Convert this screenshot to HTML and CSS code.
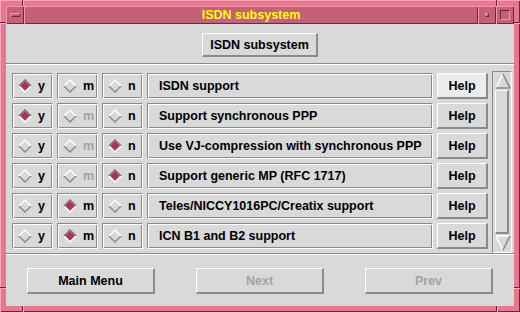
FILE: index.html
```html
<!DOCTYPE html>
<html>
<head>
<meta charset="utf-8">
<link rel="stylesheet" href="styles.css">
</head>
<body>
<div class="win">
  <span class="brk v t l1"></span><span class="brk v t r1"></span>
  <span class="brk v b l1"></span><span class="brk v b r1"></span>
  <span class="brk h l t2"></span><span class="brk h r t2"></span>
  <span class="brk h l b2"></span><span class="brk h r b2"></span>
  <div class="titlebar">
    <div class="tbtn"><span class="bar"></span></div>
    <div class="title">ISDN subsystem</div>
    <div class="tbtn"><span class="dot"></span></div>
    <div class="tbtn"><span class="sq"></span></div>
  </div>
  <div class="content">
    <div class="top"><div class="btn topbtn">ISDN subsystem</div></div>
    <div class="sep"></div>
    <div class="list">
      <div class="rows">
        <div class="row">
          <div class="box radio"><svg class="dia on" viewBox="0 0 14 14"><polygon class="f" points="2,7 7,2 12,7 7,12"/><polygon class="hi" points="0,7 7,0 14,7 12,7 7,2 2,7"/><polygon class="lo" points="0,7 7,14 14,7 12,7 7,12 2,7"/></svg><span>y</span></div>
          <div class="box radio"><svg class="dia" viewBox="0 0 14 14"><polygon class="f" points="2,7 7,2 12,7 7,12"/><polygon class="hi" points="0,7 7,0 14,7 12,7 7,2 2,7"/><polygon class="lo" points="0,7 7,14 14,7 12,7 7,12 2,7"/></svg><span>m</span></div>
          <div class="box radio"><svg class="dia" viewBox="0 0 14 14"><polygon class="f" points="2,7 7,2 12,7 7,12"/><polygon class="hi" points="0,7 7,0 14,7 12,7 7,2 2,7"/><polygon class="lo" points="0,7 7,14 14,7 12,7 7,12 2,7"/></svg><span>n</span></div>
          <div class="box label">ISDN support</div>
          <div class="btn help active">Help</div>
        </div>
        <div class="row">
          <div class="box radio"><svg class="dia on" viewBox="0 0 14 14"><polygon class="f" points="2,7 7,2 12,7 7,12"/><polygon class="hi" points="0,7 7,0 14,7 12,7 7,2 2,7"/><polygon class="lo" points="0,7 7,14 14,7 12,7 7,12 2,7"/></svg><span>y</span></div>
          <div class="box radio dis"><svg class="dia" viewBox="0 0 14 14"><polygon class="f" points="2,7 7,2 12,7 7,12"/><polygon class="hi" points="0,7 7,0 14,7 12,7 7,2 2,7"/><polygon class="lo" points="0,7 7,14 14,7 12,7 7,12 2,7"/></svg><span>m</span></div>
          <div class="box radio"><svg class="dia" viewBox="0 0 14 14"><polygon class="f" points="2,7 7,2 12,7 7,12"/><polygon class="hi" points="0,7 7,0 14,7 12,7 7,2 2,7"/><polygon class="lo" points="0,7 7,14 14,7 12,7 7,12 2,7"/></svg><span>n</span></div>
          <div class="box label">Support synchronous PPP</div>
          <div class="btn help">Help</div>
        </div>
        <div class="row">
          <div class="box radio"><svg class="dia" viewBox="0 0 14 14"><polygon class="f" points="2,7 7,2 12,7 7,12"/><polygon class="hi" points="0,7 7,0 14,7 12,7 7,2 2,7"/><polygon class="lo" points="0,7 7,14 14,7 12,7 7,12 2,7"/></svg><span>y</span></div>
          <div class="box radio dis"><svg class="dia" viewBox="0 0 14 14"><polygon class="f" points="2,7 7,2 12,7 7,12"/><polygon class="hi" points="0,7 7,0 14,7 12,7 7,2 2,7"/><polygon class="lo" points="0,7 7,14 14,7 12,7 7,12 2,7"/></svg><span>m</span></div>
          <div class="box radio"><svg class="dia on" viewBox="0 0 14 14"><polygon class="f" points="2,7 7,2 12,7 7,12"/><polygon class="hi" points="0,7 7,0 14,7 12,7 7,2 2,7"/><polygon class="lo" points="0,7 7,14 14,7 12,7 7,12 2,7"/></svg><span>n</span></div>
          <div class="box label">Use VJ-compression with synchronous PPP</div>
          <div class="btn help">Help</div>
        </div>
        <div class="row">
          <div class="box radio"><svg class="dia" viewBox="0 0 14 14"><polygon class="f" points="2,7 7,2 12,7 7,12"/><polygon class="hi" points="0,7 7,0 14,7 12,7 7,2 2,7"/><polygon class="lo" points="0,7 7,14 14,7 12,7 7,12 2,7"/></svg><span>y</span></div>
          <div class="box radio dis"><svg class="dia" viewBox="0 0 14 14"><polygon class="f" points="2,7 7,2 12,7 7,12"/><polygon class="hi" points="0,7 7,0 14,7 12,7 7,2 2,7"/><polygon class="lo" points="0,7 7,14 14,7 12,7 7,12 2,7"/></svg><span>m</span></div>
          <div class="box radio"><svg class="dia on" viewBox="0 0 14 14"><polygon class="f" points="2,7 7,2 12,7 7,12"/><polygon class="hi" points="0,7 7,0 14,7 12,7 7,2 2,7"/><polygon class="lo" points="0,7 7,14 14,7 12,7 7,12 2,7"/></svg><span>n</span></div>
          <div class="box label">Support generic MP (RFC 1717)</div>
          <div class="btn help">Help</div>
        </div>
        <div class="row">
          <div class="box radio"><svg class="dia" viewBox="0 0 14 14"><polygon class="f" points="2,7 7,2 12,7 7,12"/><polygon class="hi" points="0,7 7,0 14,7 12,7 7,2 2,7"/><polygon class="lo" points="0,7 7,14 14,7 12,7 7,12 2,7"/></svg><span>y</span></div>
          <div class="box radio"><svg class="dia on" viewBox="0 0 14 14"><polygon class="f" points="2,7 7,2 12,7 7,12"/><polygon class="hi" points="0,7 7,0 14,7 12,7 7,2 2,7"/><polygon class="lo" points="0,7 7,14 14,7 12,7 7,12 2,7"/></svg><span>m</span></div>
          <div class="box radio"><svg class="dia" viewBox="0 0 14 14"><polygon class="f" points="2,7 7,2 12,7 7,12"/><polygon class="hi" points="0,7 7,0 14,7 12,7 7,2 2,7"/><polygon class="lo" points="0,7 7,14 14,7 12,7 7,12 2,7"/></svg><span>n</span></div>
          <div class="box label">Teles/NICCY1016PC/Creatix support</div>
          <div class="btn help">Help</div>
        </div>
        <div class="row">
          <div class="box radio"><svg class="dia" viewBox="0 0 14 14"><polygon class="f" points="2,7 7,2 12,7 7,12"/><polygon class="hi" points="0,7 7,0 14,7 12,7 7,2 2,7"/><polygon class="lo" points="0,7 7,14 14,7 12,7 7,12 2,7"/></svg><span>y</span></div>
          <div class="box radio"><svg class="dia on" viewBox="0 0 14 14"><polygon class="f" points="2,7 7,2 12,7 7,12"/><polygon class="hi" points="0,7 7,0 14,7 12,7 7,2 2,7"/><polygon class="lo" points="0,7 7,14 14,7 12,7 7,12 2,7"/></svg><span>m</span></div>
          <div class="box radio"><svg class="dia" viewBox="0 0 14 14"><polygon class="f" points="2,7 7,2 12,7 7,12"/><polygon class="hi" points="0,7 7,0 14,7 12,7 7,2 2,7"/><polygon class="lo" points="0,7 7,14 14,7 12,7 7,12 2,7"/></svg><span>n</span></div>
          <div class="box label">ICN B1 and B2 support</div>
          <div class="btn help">Help</div>
        </div>
      </div>
      <div class="sb">
        <svg class="arrow" viewBox="0 0 16 16"><polygon points="8,1 15,15 1,15" fill="#d9d9d9"/><line x1="1" y1="15" x2="8" y2="1" stroke="#fff" stroke-width="1.5"/><line x1="8" y1="1" x2="15" y2="15" stroke="#8a8a8a" stroke-width="1.5"/><line x1="1" y1="15" x2="15" y2="15" stroke="#8a8a8a" stroke-width="1.5"/></svg>
        <div class="slider"></div>
        <svg class="arrow" viewBox="0 0 16 16"><polygon points="1,1 15,1 8,15" fill="#d9d9d9"/><line x1="1" y1="1" x2="15" y2="1" stroke="#fff" stroke-width="1.5"/><line x1="1" y1="1" x2="8" y2="15" stroke="#fff" stroke-width="1.5"/><line x1="15" y1="1" x2="8" y2="15" stroke="#8a8a8a" stroke-width="1.5"/></svg>
      </div>
    </div>
    <div class="sep"></div>
    <div class="bottom">
      <div class="btn bbtn">Main Menu</div>
      <div class="btn bbtn dis">Next</div>
      <div class="btn bbtn dis">Prev</div>
    </div>
  </div>
</div>
</body>
</html>
```
FILE: styles.css
```css
* { box-sizing: border-box; }
html, body { margin: 0; padding: 0; }
body {
  width: 520px;
  height: 312px;
  overflow: hidden;
  background: #e87890;
  font-family: "Liberation Sans", Arial, sans-serif;
  font-weight: bold;
  font-size: 12.5px;
  color: #000;
}
.win {
  position: relative;
  width: 520px;
  height: 312px;
  padding: 6px;
  background: #e87890;
  box-shadow: inset 1px 1px 0 #ffa8bc, inset -1px -1px 0 #6c2438;
  display: flex;
  flex-direction: column;
}
.brk { position: absolute; }
.brk.v { width: 2px; height: 6px; border-left: 1px solid #6c2438; border-right: 1px solid #ffa8bc; }
.brk.v.t { top: 0; }
.brk.v.b { bottom: 0; }
.brk.v.l1 { left: 22px; }
.brk.v.r1 { left: 496px; }
.brk.h { width: 6px; height: 2px; border-top: 1px solid #6c2438; border-bottom: 1px solid #ffa8bc; }
.brk.h.l { left: 0; }
.brk.h.r { right: 0; }
.brk.h.t2 { top: 22px; }
.brk.h.b2 { top: 287px; }

.titlebar { display: flex; height: 18px; }
.tbtn, .title {
  background: #c46078;
  box-shadow: inset 1px 1px 0 #f498ac, inset -1px -1px 0 #70283c;
}
.tbtn { width: 18px; flex: none; display: flex; align-items: center; justify-content: center; }
.title { flex: 1; color: #ffff00; text-align: center; line-height: 18px; }
.bar {
  width: 10px; height: 4px;
  background: #c46078;
  box-shadow: inset 1px 1px 0 #f498ac, inset -1px -1px 0 #70283c;
}
.dot {
  width: 4px; height: 4px;
  background: #c46078;
  border: 1px solid; border-color: #f498ac #70283c #70283c #f498ac;
}
.sq {
  width: 10px; height: 10px;
  border: 1px solid; border-color: #70283c #f498ac #f498ac #70283c;
}

.content { flex: 1; background: #d9d9d9; display: flex; flex-direction: column; }
.top { padding: 9px 0 6px; display: flex; justify-content: center; }
.btn {
  display: flex; align-items: center; justify-content: center;
  background: #d9d9d9;
  border-style: solid;
  border-width: 1px 2px 2px 1px;
  border-color: #fff #8a8a8a #8a8a8a #fff;
}
.topbtn { width: 116px; height: 24px; }
.sep { height: 2px; border-top: 1px solid #8a8a8a; border-bottom: 1px solid #fff; }

.list { display: flex; gap: 4px; padding: 6px 2px 0 6px; }
.rows { display: flex; flex-direction: column; gap: 4px; margin-top: 2px; }
.row { display: flex; gap: 4px; height: 26px; }
.box {
  border: 1px solid;
  border-color: #8a8a8a #fff #fff #8a8a8a;
  box-shadow: inset 1px 1px 0 #fff, inset -1px -1px 0 #8a8a8a;
}
.radio { width: 41px; display: flex; align-items: center; padding-left: 5px; gap: 6px; }
.radio.dis span { color: #a3a3a3; }
.dia { width: 14px; height: 14px; flex: none; }
.dia .f { fill: #d9d9d9; }
.dia .hi { fill: #ffffff; }
.dia .lo { fill: #8a8a8a; }
.dia.on .f { fill: #b03060; }
.dia.on .hi { fill: #6e6e6e; }
.dia.on .lo { fill: #ffffff; }
.label { width: 286px; display: flex; align-items: center; padding-left: 11px; }
.help { width: 51px; height: 26px; }
.help.active { background: #ececec; }

.sb {
  width: 20px; height: 182px;
  border: 1px solid; border-color: #8a8a8a #fff #fff #8a8a8a;
  padding: 1px 2px 1px 2px;
  display: flex; flex-direction: column; gap: 1px;
}
.arrow { width: 16px; height: 16px; flex: none; }
.slider {
  flex: 1;
  border-style: solid;
  border-width: 1px 2px 2px 1px;
  border-color: #fff #8a8a8a #8a8a8a #fff;
}

.bottom { padding: 13px 0 12px; display: flex; justify-content: center; gap: 41px; }
.bbtn { width: 128px; height: 26px; }
.bbtn.dis { color: #a3a3a3; }
```
